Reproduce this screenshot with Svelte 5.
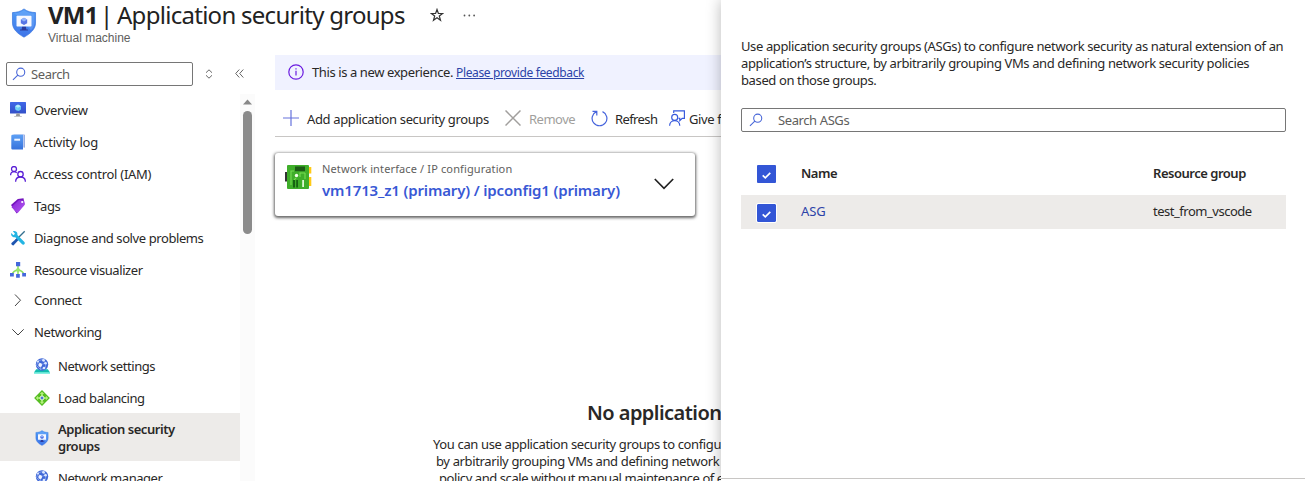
<script>
  const items = [
    { icon: 'monitor', label: 'Overview', ls: -0.4 },
    { icon: 'book', label: 'Activity log', ls: -0.2 },
    { icon: 'people', label: 'Access control (IAM)', ls: -0.28 },
    { icon: 'tag', label: 'Tags', ls: -0.3 },
    { icon: 'tools', label: 'Diagnose and solve problems', ls: -0.41 },
    { icon: 'tree', label: 'Resource visualizer', ls: -0.42 }
  ];
  const children = [
    { icon: 'globe', label: 'Network settings' },
    { icon: 'balance', label: 'Load balancing' },
    { icon: 'shield', label: 'Application security groups', selected: true },
    { icon: 'globe', label: 'Network manager' }
  ];
</script>

{#snippet icon(name, size)}
  {#if name === 'monitor'}
    <svg width={size} height={size} viewBox="0 0 16 16">
      <defs><linearGradient id="mon" x1="0" y1="0" x2="0" y2="1"><stop offset="0" stop-color="#4068e8" /><stop offset="1" stop-color="#3350c8" /></linearGradient></defs>
      <rect x="0" y="0" width="16" height="11.500" rx=".5" fill="url(#mon)" />
      <circle cx="8" cy="5.700" r="3" fill="#6fd0f5" /><path d="M8 5.700 10.900 4.200v3.100L8 9z" fill="#68c8f3" /><path d="M8 5.700 5.200 4.200 8 2.500l2.800 1.700z" fill="#b5ecfb" />
      <path d="M6.400 11.500h3.200l.5 2.600H5.900z" fill="#999" /><rect x="4.200" y="14" width="7.600" height="1" fill="#c4c4c8" />
    </svg>
  {:else if name === 'book'}
    <svg width={size} height={size} viewBox="0 0 16 16">
      <defs><linearGradient id="bk" x1="0" y1="0" x2="0" y2="1"><stop offset="0" stop-color="#5ca0f5" /><stop offset="1" stop-color="#3672dc" /></linearGradient></defs>
      <path d="M3.500.3H14a1 1 0 0 1 1 1v12.200H3z" fill="#b9c8ef" /><path d="M14.500 1v12.500" stroke="#8da4dc" stroke-width=".7" />
      <path d="M2.500.7H13v14.800H2.500a1.300 1.300 0 0 1-1.200-1.300V1.900A1.200 1.200 0 0 1 2.500.7z" fill="url(#bk)" /><rect x="4.300" y="4.700" width="5.800" height="2" fill="#eef4ff" />
    </svg>
  {:else if name === 'people'}
    <svg width={size} height={size} viewBox="0 0 16 16" fill="none" stroke="#5a1fd6" stroke-width="1.300">
      <circle cx="4" cy="3" r="2.500" /><path d="M.6 9.200C.7 6.800 2 5.700 4 5.700c1.200 0 2 .4 2.700 1.200" />
      <circle cx="10.500" cy="8.200" r="2.700" /><path d="M5.600 15.700c.1-3 2-4.700 4.900-4.700s4.800 1.700 4.900 4.700" />
    </svg>
  {:else if name === 'tag'}
    <svg width={size} height={size} viewBox="0 0 16 16">
      <defs><linearGradient id="tg" x1="0" y1="0" x2="1" y2="1"><stop offset="0" stop-color="#8a22d8" /><stop offset="1" stop-color="#b35cf0" /></linearGradient></defs>
      <path d="M1 7 7.800.9 13.500.2l1.100 5.900-8 9.300z" fill="#7415bd" />
      <path d="M2.300 8.200 9 2l5.100.7.700 4L7.500 15.300 1.500 9.300z" fill="url(#tg)" /><circle cx="12.200" cy="4" r="1.100" fill="#fff" />
    </svg>
  {:else if name === 'tools'}
    <svg width={size} height={size} viewBox="0 0 16 16">
      <path d="M14.700 1.300 5.500 10.500" stroke="#35708f" stroke-width="1.300" /><path d="m6.700 8.200 1.900 1.900-5 5.100c-1 .8-3-1-2.100-2.100z" fill="#1e55b0" />
      <path d="M1.200 3 3.500 5.200 5 3.800 2.900 1.300c2-.8 4.400.4 4.500 2.500v1.300l7 6.800c1.400 1.500-.8 3.700-2.300 2.300L5.300 7.300c-2.700.4-4.700-1.600-4.100-4.300z" fill="#24b5e3" />
    </svg>
  {:else if name === 'tree'}
    <svg width={size} height={size} viewBox="0 0 16 16">
      <path d="M8 4v8M8 7.800C5 8.500 3 10 2 12.500M8 7.800c3 .7 5 2.200 6 4.700" stroke="#8be05e" stroke-width="1.500" fill="none" /><circle cx="8" cy="8" r="1.900" fill="#9be86c" />
      <path d="M6 0h4.200v4.200H6zM0 11h3.800v3.600H0zM6.100 12h3.700v3.700H6.100zM12.200 11H16v3.600h-3.800z" fill="#4468dc" />
    </svg>
  {:else if name === 'globe'}
    <svg width={size} height={size} viewBox="0 0 16 16">
      <path d="M2.200 11.300h11.600L16 14.500H0z" fill="#12bcae" /><rect y="14.300" width="16" height="1.400" fill="#55e8d4" />
      <circle cx="8" cy="6.500" r="6.200" fill="#4068d8" />
      <path d="M4 3 8.500 1.500l3.700 3.200-1 5-4.700 1.800L2.500 7.500zM4 3l2.500 4 5.700-2.300M6.500 7v4.500" stroke="#a9c0f2" fill="none" stroke-width=".6" />
      <circle cx="6.200" cy="7" r="1.900" fill="#f0f4ff" /><circle cx="9.500" cy="2.300" r="1.400" fill="#dce8ff" /><circle cx="11.500" cy="5.300" r="1.300" fill="#dce8ff" /><circle cx="10" cy="10" r="1.300" fill="#dce8ff" /><circle cx="4" cy="3.500" r="1" fill="#dce8ff" />
    </svg>
  {:else if name === 'balance'}
    <svg width={size} height={size} viewBox="0 0 16 16">
      <path d="m8 .1 7.900 7.900L8 15.900.1 8z" fill="#55bd22" />
      <path d="m8 1.700 2.200 2.400H8.800V6H7.200V4.100H5.800zM1.800 8l2.300-2.200v1.400H6v1.600H4.100v1.400zM14.200 8l-2.300-2.200v1.400H10v1.600h1.900v1.400zM8 14.200l-2.200-2.400h1.400V10h1.600v1.800h1.400z" fill="#b4f07c" />
      <circle cx="8" cy="8" r="2" fill="#4c73d8" stroke="#e5ffd5" stroke-width="1" />
    </svg>
  {:else if name === 'shield'}
    <svg width={size} height={size} viewBox="0 0 28 32">
      <defs><linearGradient id="sh" x1="0" y1="0" x2="0" y2="1"><stop offset="0" stop-color="#4f9cf5" /><stop offset="1" stop-color="#3f74e8" /></linearGradient></defs>
      <path d="M14 1c3.800 3 7.600 3.600 12.300 3.900v11.200c0 6.800-6.300 11.800-12.300 15C8 27.900 1.700 22.900 1.700 16.100V4.900C6.400 4.600 10.200 4 14 1z" fill="url(#sh)" stroke="#2f70de" stroke-width=".7" />
      <path d="M14 2.500c3.500 2.400 6.800 3.200 11 3.500v10c0 3-1.300 5.500-3.500 7.800L5 6.700 3.500 5.800C8 5.200 10.500 4.900 14 2.500z" fill="#8abaff" opacity=".3" />
      <rect x="6" y="8.300" width="16" height="11.400" rx=".7" fill="#f6f8ff" />
      <path d="m14 10.400 3.400 1.900v3.900L14 18.100l-3.400-1.900v-3.900z" fill="#5775e5" /><path d="m14 10.400 3.400 1.900-3.400 2-3.400-2z" fill="#91b4fa" />
      <path d="M12 20h4l.5 2.800h1.800V24H9.700v-1.200h1.800z" fill="#2c3a9b" />
    </svg>
  {:else if name === 'search'}
    <svg width={size} height={size} viewBox="0 0 16 16" fill="none" stroke="#4866d8" stroke-width="1.150"><circle cx="9.300" cy="5.500" r="4.300" /><path d="M6.200 8.600 1 13.700" /></svg>
  {/if}
{/snippet}

<div class="app">
  <header>
    <span class="logo">{@render icon('shield', 30)}</span>
    <div class="titles">
      <h1><b>VM1</b><span class="bar">|</span><span class="page">Application security groups</span></h1>
      <p>Virtual machine</p>
    </div>
    <svg class="star" width="14" height="14" viewBox="0 0 14 14" fill="none" stroke="#333" stroke-width="1.200"><path d="m7 1.500 1.400 4h4.200L9.300 8l1.200 4.200L7 9.800l-3.500 2.400L4.700 8 1.400 5.500h4.200z" /></svg>
    <svg class="more" width="13" height="3" viewBox="0 0 13 3" fill="#555"><circle cx="1.500" cy="1.500" r=".9" /><circle cx="6.300" cy="1.500" r=".9" /><circle cx="11.100" cy="1.500" r=".9" /></svg>
  </header>

  <div class="body">
    <nav>
      <div class="find">
        <div class="box">{@render icon('search', 15)}<span>Search</span></div>
        <svg width="8" height="10" viewBox="0 0 8 10" fill="none" stroke="#666"><path d="M1 3.700 4 .8l3 2.900M1 6.300l3 2.900 3-2.900" /></svg>
        <svg class="fold" width="9" height="9" viewBox="0 0 9 9" fill="none" stroke="#666"><path d="M4.300.5.700 4.500l3.600 4M8.300.5 4.700 4.500l3.600 4" /></svg>
      </div>
      <div class="scroll">
        <div class="list">
          {#each items as item}
            <div class="item"><span class="ic">{@render icon(item.icon, 16)}</span><span class="t" style="letter-spacing: {item.ls}px">{item.label}</span></div>
          {/each}
          <div class="item group first"><svg width="16" height="16" viewBox="0 0 16 16" fill="none" stroke="#444"><path d="m5 2.500 5.500 5.700L5 14" /></svg><span class="t">Connect</span></div>
          <div class="item group"><svg width="16" height="16" viewBox="0 0 16 16" fill="none" stroke="#444"><path d="M2.300 5.300 8 11l5.700-5.700" /></svg><span class="t">Networking</span></div>
          <div class="subs">
            {#each children as c}
              <div class="item sub" class:selected={c.selected}><span class="ic">{@render icon(c.icon, 16)}</span><span class="t">{c.label}</span></div>
            {/each}
          </div>
        </div>
        <div class="track"><svg width="9" height="6" viewBox="0 0 9 6"><path d="M0 5.500 4.500.5 9 5.500z" fill="#888" /></svg><div class="thumb"></div></div>
      </div>
    </nav>

    <main>
      <div class="banner">
        <svg width="16" height="16" viewBox="0 0 16 16" fill="none" stroke="#6a1be0" stroke-width="1.200"><circle cx="8" cy="8" r="7.200" /><path d="M8 6.800v4.700M8 4.300v1.200" /></svg>
        <span class="new">This is a new experience.</span><a href="#feedback">Please provide feedback</a>
      </div>
      <div class="tools">
        <svg width="16" height="16" viewBox="0 0 16 16" stroke="#6672dc" stroke-width="1.200"><path d="M8 0v16M0 8h16" /></svg><span class="add">Add application security groups</span>
        <svg class="x" width="16" height="16" viewBox="0 0 16 16" stroke="#a19f9d" stroke-width="1.500"><path d="m.5.500 15 15M15.500.5l-15 15" /></svg><span class="rem">Remove</span>
        <svg class="ref" width="17" height="17" viewBox="0 0 17 17" fill="none" stroke="#4563dc" stroke-width="1.200"><path d="M11.500 1.600A7.400 7.400 0 1 1 5.500 1.600M1.500 1.400h4.300v4.200" /></svg><span class="rfr">Refresh</span>
        <svg class="fb" width="16" height="16" viewBox="0 0 16 16" fill="none" stroke="#3558dc" stroke-width="1.150"><circle cx="5.700" cy="7.400" r="3" /><path d="M.6 15.700c.2-3.300 2-5 5.100-5s4.900 1.700 5.100 5M4.700 3V.8h10.700v7.500h-2.200l-2.400 2.300V8.300H9.500" /></svg><span class="give">Give feedback</span>
      </div>
      <div class="card">
        <svg width="28" height="26" viewBox="0 0 28 26">
          <rect x="0" y="8" width="3" height="9.500" fill="#333" /><path d="M23 3h3.300v6.500H23zM23 13h3.300v9H23z" fill="#ffca16" />
          <rect x="2" y="1" width="22" height="24" rx="1" fill="#3fae2a" /><path d="M6 21V7h3M20 9h-5v4M20 9v6M9 16l2-2" fill="none" stroke="#76dc50" stroke-width="1.100" />
          <rect x="10" y="2.500" width="10" height="4.700" fill="#1c5b15" /><circle cx="11.500" cy="11.500" r="1.700" fill="#f2ffe8" /><path d="M8 16h2v7.500H8zM11.200 16h1.800v7.500h-1.800z" fill="#176312" /><path d="M17.300 16h1.600v7h-1.600z" fill="#f2ffe8" />
        </svg>
        <div class="nic"><p>Network interface / IP configuration</p><strong>vm1713_z1 (primary) / ipconfig1 (primary)</strong></div>
        <svg class="chev" width="20" height="12" viewBox="0 0 20 12" fill="none" stroke="#222" stroke-width="1.700"><path d="m.8 1 9.200 9.300L19.200 1" /></svg>
      </div>
      <section class="empty">
        <h2>No application security groups</h2>
        <p class="l1">You can use application security groups to configure</p>
        <p class="l2">by arbitrarily grouping VMs and defining network security</p>
        <p class="l3">policy and scale without manual maintenance of explicit</p>
      </section>
    </main>
  </div>

  <aside>
    <div class="intro">
      <p>Use application security groups (ASGs) to configure network security as natural extension of an</p>
      <p>application’s structure, by arbitrarily grouping VMs and defining network security policies</p>
      <p>based on those groups.</p>
    </div>
    <div class="box wide">{@render icon('search', 15)}<span>Search ASGs</span></div>
    <div class="row head"><i class="check"><svg width="9" height="7" viewBox="0 0 9 7"><path d="m.7 3.300 2.600 2.500L8.300.9" /></svg></i><span class="nm">Name</span><span class="rg">Resource group</span></div>
    <div class="row data"><i class="check"><svg width="9" height="7" viewBox="0 0 9 7"><path d="m.7 3.300 2.600 2.500L8.300.9" /></svg></i><span class="nm">ASG</span><span class="rg">test_from_vscode</span></div>
    <div class="foot"></div>
  </aside>
</div>

<style>
  :global(body) { margin: 0; background: #fff; }
  * { box-sizing: border-box; }
  p, h1, h2 { margin: 0; font-weight: 400; }
  svg { flex: none; display: block; }
  .app { position: relative; width: 1305px; height: 481px; overflow: hidden; background: #fff; color: #292827; font: 13px/17px "Noto Sans", sans-serif; letter-spacing: -.4px; white-space: nowrap; display: flex; flex-direction: column; }
  header { height: 55px; flex: none; display: flex; align-items: flex-start; padding-left: 9px; }
  .logo { padding-top: 8px; width: 39px; }
  h1 { display: flex; font-size: 24px; line-height: 29px; height: 30px; color: #222; letter-spacing: -.72px; }
  h1 b { width: 52px; letter-spacing: -.8px; }
  .bar { width: 17px; }
  .titles { width: 382px; }
  .titles p { font: 12px/16px "Liberation Sans", sans-serif; color: #605e5c; letter-spacing: 0; }
  .star { margin-top: 8px; }
  .more { margin: 14px 0 0 19px; }
  .body { display: flex; height: 426px; }
  nav { width: 255px; flex: none; display: flex; flex-direction: column; }
  .find { height: 39px; flex: none; padding: 7px 0 0 6px; display: flex; align-items: flex-start; }
  .find > svg { margin: 7px 0 0 12px; }
  .find .fold { margin: 7px 0 0 22px; }
  .box { width: 187px; height: 24px; border: 1px solid #767676; border-radius: 2px; display: flex; align-items: center; padding-left: 5px; color: #605e5c; }
  .box span { padding-left: 4px; }
  .scroll { height: 387px; display: flex; overflow: hidden; }
  .list { width: 240px; }
  .item { height: 32px; display: flex; align-items: center; padding-left: 10px; }
  .item .t { margin-left: 8px; }
  .first { margin-top: -2px; }
  .subs { padding-top: 2px; }
  .sub { padding-left: 34px; letter-spacing: -.45px; }
  .selected { margin-top: -1px; height: 48px; padding-top: 2px; background: #edebe9; font-weight: 600; white-space: normal; margin-bottom: 1px; }
  .selected .t { width: 140px; }
  .track { width: 15px; background: #fbfbfb; display: flex; flex-direction: column; align-items: center; padding-top: 5px; }
  .thumb { width: 9px; height: 123px; margin-top: 6px; border-radius: 5px; background: #8b8b8b; }
  main { width: 1030px; margin-left: 20px; flex: none; }
  .banner { height: 35px; background: #f0f2ff; display: flex; align-items: center; padding-left: 13px; }
  .banner svg { margin-top: -1px; }
  .new { margin-left: 8px; width: 144px; }
  a { color: #2c43a8; font-size: 12px; letter-spacing: -.36px; }
  .tools { height: 47px; border-bottom: 1px solid #c8c6c4; display: flex; align-items: center; padding: 10px 0 0 8px; }
  .tools span { padding-top: 2px; }
  .add { margin-left: 8px; width: 198px; letter-spacing: -.36px; }
  .rem { color: #a19f9d; margin-left: 8px; width: 62px; letter-spacing: -.5px; }
  .rfr { margin-left: 7px; width: 54px; letter-spacing: -.6px; }
  .give { margin-left: 4px; }
  .card { width: 420px; height: 63px; margin-top: 16px; border-radius: 3px; box-shadow: 0 1px 3px 1px #666; display: flex; padding: 7px 0 0 10px; }
  .card > svg:first-child { margin-top: 4px; }
  .nic { width: 341px; padding-left: 9px; }
  .nic p { font-size: 11px; color: #605e5c; line-height: 17px; letter-spacing: .13px; }
  .nic strong { display: block; font-size: 15px; line-height: 24px; font-weight: 600; color: #3858d5; padding-top: 1px; letter-spacing: -.15px; }
  .card .chev { margin-top: 18px; }
  .empty { margin-top: 183px; }
  h2 { font-size: 20px; line-height: 28px; font-weight: 600; padding-left: 312px; margin-bottom: 9px; letter-spacing: -.55px; }
  .empty p { letter-spacing: -.37px; }
  .l1 { padding-left: 158px; }
  .l2 { padding-left: 161px; }
  .empty .l3 { padding-left: 164px; letter-spacing: -.43px; }
  aside { position: absolute; left: 721px; top: 0; width: 584px; height: 481px; background: #fff; box-shadow: 0 0 14px rgba(0,0,0,.28); padding: 38px 19px 0 20px; display: flex; flex-direction: column; }
  .intro { letter-spacing: -.38px; }
  .wide { width: 545px; margin-top: 19px; flex: none; padding-left: 7px; }
  .wide span { padding-left: 14px; }
  .row { display: flex; align-items: center; height: 34px; padding-left: 16px; letter-spacing: -.48px; }
  .row span { padding-bottom: 2px; }
  .head { margin-top: 25px; font-weight: 600; height: 34px; }
  .data { margin-top: 4px; background: #edebe9; }
  .check { width: 19px; height: 18px; background: #3356d6; border-radius: 1px; display: grid; place-items: center; padding-top: 2px; }
  .check path { fill: none; stroke: #fff; stroke-width: 1.700; }
  .data .check { outline: 1px solid #fff; margin-top: 2px; }
  .nm { margin-left: 25px; width: 352px; }
  .data .nm { color: #2c43a8; letter-spacing: -.1px; }
  .foot { margin: auto -19px 2px -20px; border-top: 1px solid #c8c6c4; }
</style>
